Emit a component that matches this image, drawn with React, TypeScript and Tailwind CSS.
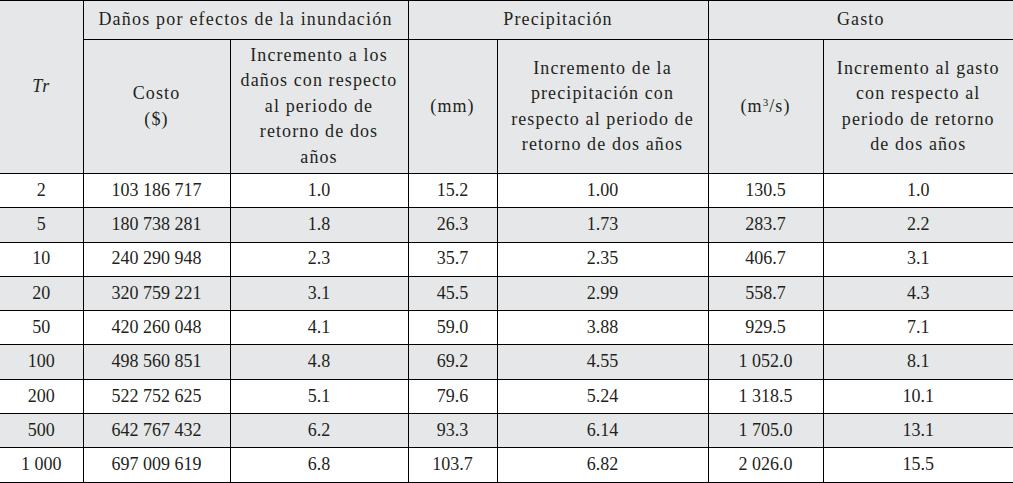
import * as React from "react";

const rows = [
  ["2", "103 186 717", "1.0", "15.2", "1.00", "130.5", "1.0"],
  ["5", "180 738 281", "1.8", "26.3", "1.73", "283.7", "2.2"],
  ["10", "240 290 948", "2.3", "35.7", "2.35", "406.7", "3.1"],
  ["20", "320 759 221", "3.1", "45.5", "2.99", "558.7", "4.3"],
  ["50", "420 260 048", "4.1", "59.0", "3.88", "929.5", "7.1"],
  ["100", "498 560 851", "4.8", "69.2", "4.55", "1 052.0", "8.1"],
  ["200", "522 752 625", "5.1", "79.6", "5.24", "1 318.5", "10.1"],
  ["500", "642 767 432", "6.2", "93.3", "6.14", "1 705.0", "13.1"],
  ["1 000", "697 009 619", "6.8", "103.7", "6.82", "2 026.0", "15.5"],
];

const widths = [83, 147, 178, 89, 211, 115, 190];

export default function App() {
  return (
    <div className="w-[1013px] h-[483px] bg-white overflow-hidden">
      <table className="w-[1013px] table-fixed border-collapse font-['Liberation_Serif','Times_New_Roman',serif] text-[18px] leading-[25.5px] text-[#231f20] text-center">
        <colgroup>
          {widths.map((w, i) => (
            <col key={i} style={{ width: w }} />
          ))}
        </colgroup>
        <thead className="bg-[#e6e7e8] tracking-[1.1px]">
          <tr className="h-[39px] border-t border-black">
            <th rowSpan={2} className="font-normal italic border-r border-black">
              Tr
            </th>
            <th colSpan={2} className="font-normal tracking-[1.2px] border-r border-b border-black">
              Daños por efectos de la inundación
            </th>
            <th colSpan={2} className="font-normal border-r border-b border-black">
              Precipitación
            </th>
            <th colSpan={2} className="font-normal border-b border-black">
              Gasto
            </th>
          </tr>
          <tr className="h-[134px]">
            <th className="font-normal border-r border-black">
              Costo
              <br />
              ($)
            </th>
            <th className="font-normal border-r border-black px-0">
              Incremento a los
              <br />
              daños con respecto
              <br />
              al periodo de
              <br />
              retorno de dos
              <br />
              años
            </th>
            <th className="font-normal border-r border-black">(mm)</th>
            <th className="font-normal border-r border-black px-2">
              Incremento de la precipitación con respecto al periodo de retorno de dos años
            </th>
            <th className="font-normal border-r border-black">
              (m<sup className="text-[11px]">3</sup>/s)
            </th>
            <th className="font-normal px-3">
              Incremento al gasto con respecto al periodo de retorno de dos años
            </th>
          </tr>
        </thead>
        <tbody>
          {rows.map((r, i) => (
            <tr
              key={i}
              className={`h-[34.3px] border-t border-black ${i % 2 === 1 ? "bg-[#e6e7e8]" : "bg-white"} ${i === rows.length - 1 ? "border-b" : ""}`}
            >
              {r.map((c, j) => (
                <td key={j} className={j < r.length - 1 ? "border-r border-black" : ""}>
                  {c}
                </td>
              ))}
            </tr>
          ))}
        </tbody>
      </table>
    </div>
  );
}
